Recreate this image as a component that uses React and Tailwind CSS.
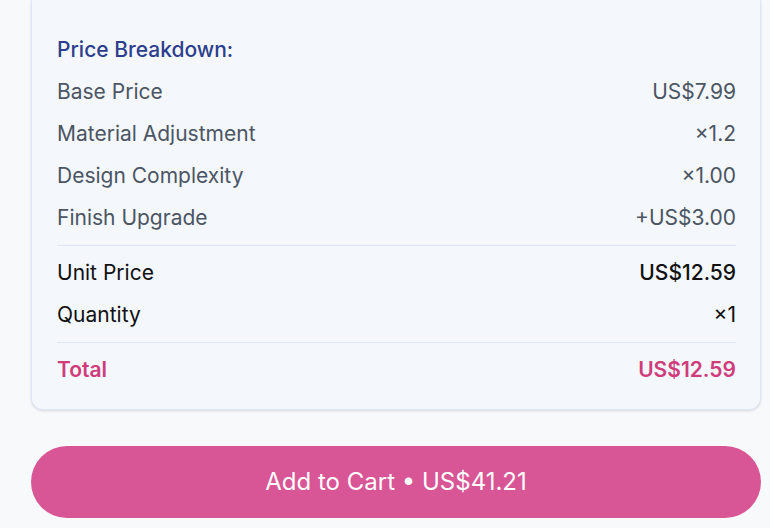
export default function App() {
  const rows = [
    ["Base Price", "US$7.99"],
    ["Material Adjustment", "×1.2"],
    ["Design Complexity", "×1.00"],
    ["Finish Upgrade", "+US$3.00"],
  ];

  return (
    <div
      className="min-h-screen bg-[#f8f9fb] pl-[31px] pr-[9px]"
      style={{ fontFamily: "Inter, 'Noto Sans', sans-serif" }}
    >
      {/* Breakdown card */}
      <div className="bg-[#f4f7fc] border-x border-b border-[#dfe8f6] rounded-b-xl shadow-sm pl-[25px] pr-6 pt-7 pb-[19px] text-[21px]">
        <div className="h-[42px] flex items-center text-[#2c3e8c] font-medium pt-px">
          Price Breakdown:
        </div>
        {rows.map(([label, value]) => (
          <div
            key={label}
            className="h-[42px] flex items-center justify-between text-[#4b5563] pt-px"
          >
            <span>{label}</span>
            <span>{value}</span>
          </div>
        ))}

        <div className="mt-[7px] mb-[5px] border-t border-[#dde6f4]" />

        <div className="h-[42px] flex items-center justify-between text-[#111111] pt-px">
          <span>Unit Price</span>
          <span className="font-medium">US$12.59</span>
        </div>
        <div className="h-[42px] flex items-center justify-between text-[#111111] pt-px">
          <span>Quantity</span>
          <span>×1</span>
        </div>

        <div className="mt-[7px] mb-[5px] border-t border-[#dde6f4]" />

        <div className="h-[42px] flex items-center justify-between text-[#d03c7b] font-semibold pt-px">
          <span>Total</span>
          <span>US$12.59</span>
        </div>
      </div>

      {/* Add to cart */}
      <button className="mt-[36px] w-full h-[72px] rounded-full bg-[#d85596] text-white text-[24px] flex items-center justify-center">
        Add to Cart • US$41.21
      </button>
    </div>
  );
}
